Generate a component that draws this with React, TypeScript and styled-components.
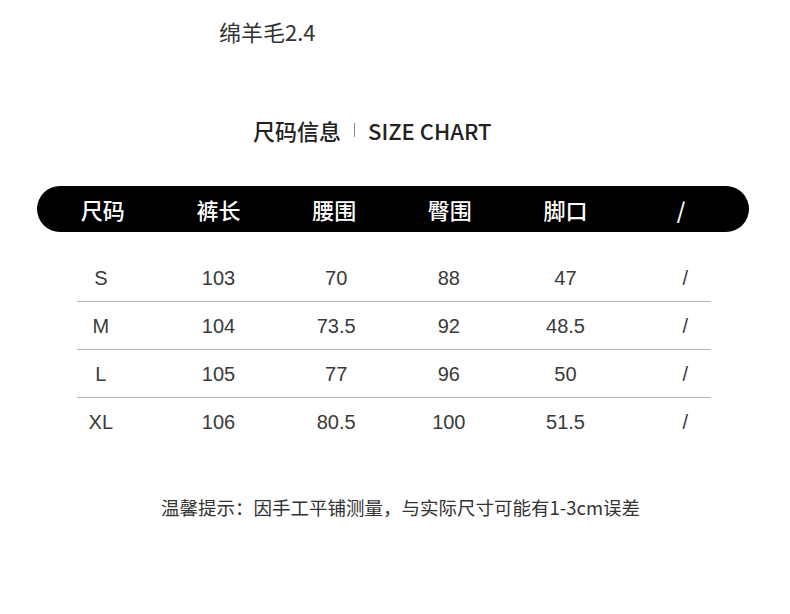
import styled, { createGlobalStyle } from 'styled-components';

const GlobalStyle = createGlobalStyle`
  html, body {
    margin: 0;
    padding: 0;
    background: #ffffff;
  }
  body {
    font-family: "Noto Sans CJK SC", "Noto Sans", sans-serif;
    color: #333333;
  }
`;

const Page = styled.div`
  width: 790px;
  height: 614px;
  overflow: hidden;
  display: flex;
  flex-direction: column;
`;

const Fabric = styled.div`
  margin: 16px 0 0 219px;
  font-size: 22px;
  line-height: 30px;
  color: #333333;
`;

const SectionTitle = styled.div`
  margin: 69px 0 0 253px;
  display: flex;
  align-items: center;
  gap: 13px;
  font-size: 22px;
  line-height: 30px;
  font-weight: 500;
  color: #222222;
`;

const Bar = styled.span`
  width: 1px;
  height: 14px;
  background: #8a8a8a;
`;

const Columns = styled.div`
  display: grid;
  grid-template-columns: repeat(6, 1fr);
  padding: 0 10px 0 8px;
  align-items: center;
  justify-items: center;
`;

const HeaderBar = styled(Columns)`
  margin: 41px 0 0 37px;
  width: 712px;
  height: 46px;
  box-sizing: border-box;
  border-radius: 23px;
  background: #000000;
  color: #ffffff;
  font-size: 22px;
  font-weight: 500;
`;

const Body = styled.div`
  margin: 22px 0 0 37px;
  width: 712px;
  display: flex;
  flex-direction: column;
`;

const Row = styled(Columns)<{ $last?: boolean }>`
  height: 48px;
  box-sizing: border-box;
  font-family: "Liberation Sans", "Noto Sans CJK SC", sans-serif;
  font-size: 20px;
  color: #3a3a3a;
  position: relative;
  &::after {
    content: '';
    display: ${(p) => (p.$last ? 'none' : 'block')};
    position: absolute;
    left: 40px;
    right: 38px;
    bottom: 0;
    height: 1px;
    background: #b4b4b4;
  }
`;

const Cell = styled.div<{ $shift?: number }>`
  transform: translateX(${(p) => p.$shift ?? 0}px);
`;

const Note = styled.div`
  margin: 48px 0 0 161px;
  font-size: 18.5px;
  line-height: 26px;
  color: #333333;
`;

const HEADERS = ['尺码', '裤长', '腰围', '臀围', '脚口', '/'];
const ROWS = [
  ['S', '103', '70', '88', '47', '/'],
  ['M', '104', '73.5', '92', '48.5', '/'],
  ['L', '105', '77', '96', '50', '/'],
  ['XL', '106', '80.5', '100', '51.5', '/'],
];
const SHIFT = [-2, 0, 2, -1, 0, 4];

const App = () => (
  <Page>
    <GlobalStyle />
    <Fabric>绵羊毛2.4</Fabric>
    <SectionTitle>
      <span>尺码信息</span>
      <Bar />
      <span>SIZE CHART</span>
    </SectionTitle>
    <HeaderBar>
      {HEADERS.map((h) => <div key={h}>{h}</div>)}
    </HeaderBar>
    <Body>
      {ROWS.map((r, i) => (
        <Row key={r[0]} $last={i === ROWS.length - 1}>
          {r.map((c, j) => <Cell key={j} $shift={SHIFT[j]}>{c}</Cell>)}
        </Row>
      ))}
    </Body>
    <Note>温馨提示：因手工平铺测量，与实际尺寸可能有1-3cm误差</Note>
  </Page>
);

export default App;
